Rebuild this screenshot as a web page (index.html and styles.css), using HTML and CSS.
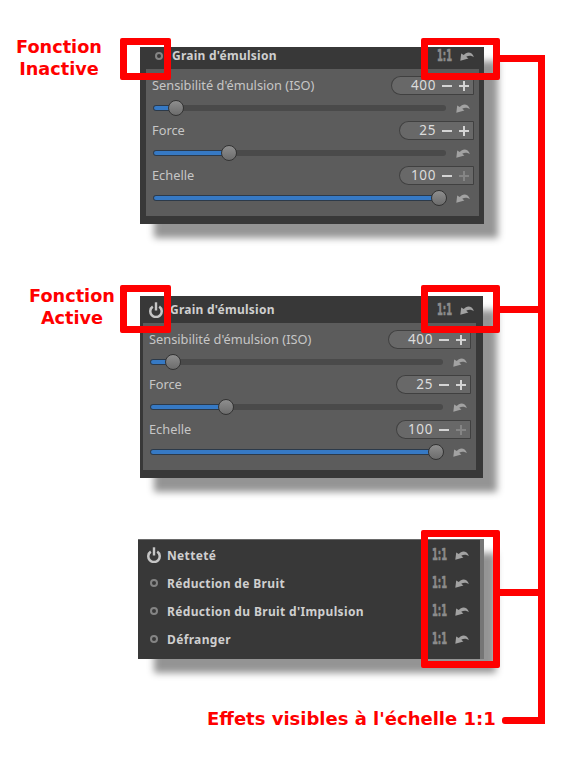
FILE: index.html
```html
<!DOCTYPE html>
<html lang="fr">
<head>
    <meta charset="utf-8">
    <title>Effets visibles à l'échelle 1:1</title>
    <link rel="stylesheet" href="styles.css">
</head>
<body>
    <!-- Icones reutilisees -->
    <svg class="defs" width="0" height="0">
        <symbol id="undo" viewBox="0 0 14 10">
            <path d="M0.3 9.8 L1.2 2.6 L3.8 4 C6.5 0.6 11.8 0.2 14 6.2 C11.5 4.2 8.5 4.2 6.2 5.8 L8.4 7.6 Z" fill="currentColor"/>
        </symbol>
        <symbol id="power" viewBox="0 0 14 16">
            <path d="M3.8 4.6 A5.7 5.7 0 1 0 10.2 4.6" fill="none" stroke="currentColor" stroke-width="2.5"/>
            <rect x="5.8" y="0.3" width="2.4" height="8.2" fill="currentColor"/>
        </symbol>
        <symbol id="minus" viewBox="0 0 10 10">
            <rect x="0" y="4" width="10" height="2" fill="currentColor"/>
        </symbol>
        <symbol id="plus" viewBox="0 0 10 10">
            <rect x="0" y="4" width="10" height="2" fill="currentColor"/>
            <rect x="4" y="0" width="2" height="10" fill="currentColor"/>
        </symbol>
    </svg>

    <div class="canvas">
        <!-- Fonction inactive -->
        <div class="panel panel-inactive">
            <div class="panel-header">
                <span class="dot"></span>
                <span class="panel-title">Grain d'émulsion</span>
                <span class="scale"><span class="scale-text">1:1</span></span>
                <svg class="undo"><use href="#undo"/></svg>
            </div>
            <div class="panel-body">
                <div class="param-label">
                    <span>Sensibilité d'émulsion (ISO)</span>
                    <div class="spin spin-wide">
                        <span class="spin-value">400</span>
                        <svg class="spin-btn"><use href="#minus"/></svg>
                        <svg class="spin-btn"><use href="#plus"/></svg>
                    </div>
                </div>
                <div class="param-slider">
                    <div class="track"><div class="fill" style="width: 7.8%"><span class="thumb"></span></div></div>
                    <svg class="undo"><use href="#undo"/></svg>
                </div>
                <div class="param-label">
                    <span>Force</span>
                    <div class="spin">
                        <span class="spin-value">25</span>
                        <svg class="spin-btn"><use href="#minus"/></svg>
                        <svg class="spin-btn"><use href="#plus"/></svg>
                    </div>
                </div>
                <div class="param-slider">
                    <div class="track"><div class="fill" style="width: 26%"><span class="thumb"></span></div></div>
                    <svg class="undo"><use href="#undo"/></svg>
                </div>
                <div class="param-label">
                    <span>Echelle</span>
                    <div class="spin">
                        <span class="spin-value">100</span>
                        <svg class="spin-btn"><use href="#minus"/></svg>
                        <svg class="spin-btn disabled"><use href="#plus"/></svg>
                    </div>
                </div>
                <div class="param-slider">
                    <div class="track"><div class="fill" style="width: 97.6%"><span class="thumb"></span></div></div>
                    <svg class="undo"><use href="#undo"/></svg>
                </div>
            </div>
        </div>

        <!-- Fonction active -->
        <div class="panel panel-active">
            <div class="panel-header">
                <svg class="power"><use href="#power"/></svg>
                <span class="panel-title">Grain d'émulsion</span>
                <span class="scale"><span class="scale-text">1:1</span></span>
                <svg class="undo"><use href="#undo"/></svg>
            </div>
            <div class="panel-body">
                <div class="param-label">
                    <span>Sensibilité d'émulsion (ISO)</span>
                    <div class="spin spin-wide">
                        <span class="spin-value">400</span>
                        <svg class="spin-btn"><use href="#minus"/></svg>
                        <svg class="spin-btn"><use href="#plus"/></svg>
                    </div>
                </div>
                <div class="param-slider">
                    <div class="track"><div class="fill" style="width: 7.8%"><span class="thumb"></span></div></div>
                    <svg class="undo"><use href="#undo"/></svg>
                </div>
                <div class="param-label">
                    <span>Force</span>
                    <div class="spin">
                        <span class="spin-value">25</span>
                        <svg class="spin-btn"><use href="#minus"/></svg>
                        <svg class="spin-btn"><use href="#plus"/></svg>
                    </div>
                </div>
                <div class="param-slider">
                    <div class="track"><div class="fill" style="width: 26%"><span class="thumb"></span></div></div>
                    <svg class="undo"><use href="#undo"/></svg>
                </div>
                <div class="param-label">
                    <span>Echelle</span>
                    <div class="spin">
                        <span class="spin-value">100</span>
                        <svg class="spin-btn"><use href="#minus"/></svg>
                        <svg class="spin-btn disabled"><use href="#plus"/></svg>
                    </div>
                </div>
                <div class="param-slider">
                    <div class="track"><div class="fill" style="width: 97.6%"><span class="thumb"></span></div></div>
                    <svg class="undo"><use href="#undo"/></svg>
                </div>
            </div>
        </div>

        <!-- Liste des effets -->
        <div class="panel-list">
            <div class="list-row">
                <span class="list-icon"><svg class="power"><use href="#power"/></svg></span>
                <span class="panel-title">Netteté</span>
                <span class="scale"><span class="scale-text">1:1</span></span>
                <svg class="undo"><use href="#undo"/></svg>
            </div>
            <div class="list-row">
                <span class="list-icon"><span class="dot"></span></span>
                <span class="panel-title">Réduction de Bruit</span>
                <span class="scale"><span class="scale-text">1:1</span></span>
                <svg class="undo"><use href="#undo"/></svg>
            </div>
            <div class="list-row">
                <span class="list-icon"><span class="dot"></span></span>
                <span class="panel-title">Réduction du Bruit d'Impulsion</span>
                <span class="scale"><span class="scale-text">1:1</span></span>
                <svg class="undo"><use href="#undo"/></svg>
            </div>
            <div class="list-row">
                <span class="list-icon"><span class="dot"></span></span>
                <span class="panel-title">Défranger</span>
                <span class="scale"><span class="scale-text">1:1</span></span>
                <svg class="undo"><use href="#undo"/></svg>
            </div>
        </div>

        <!-- Annotations en rouge -->
        <div class="note note-inactive">Fonction<br>Inactive</div>
        <div class="note note-active">Fonction<br>Active</div>
        <div class="note note-scale">Effets visibles à l'échelle 1:1</div>

        <div class="box box-a"></div>
        <div class="box box-b"></div>
        <div class="box box-c"></div>
        <div class="box box-d"></div>
        <div class="box box-e"></div>

        <div class="wire wire-main"></div>
        <div class="wire wire-a"></div>
        <div class="wire wire-b"></div>
        <div class="wire wire-c"></div>
        <div class="wire wire-d"></div>
    </div>
</body>
</html>
```

FILE: styles.css
```css
/* Page */
body {
    margin: 0;
    background: #fff;
    font-family: "Noto Sans", sans-serif;
}

.defs {
    position: absolute;
}

.canvas {
    position: relative;
    width: 586px;
    height: 765px;
    overflow: hidden;
    padding-top: 47px;
    box-sizing: border-box;
}

/* Panneaux */
.panel {
    background: #383838;
    box-shadow: 14px 14px 7px rgba(0, 0, 0, 0.42);
    margin-left: 140px;
}

.panel-inactive {
    width: 344px;
    padding-bottom: 8px;
}

.panel-active {
    width: 343px;
    padding-bottom: 8px;
    margin-top: 72px;
}

.panel-header {
    display: flex;
    align-items: center;
    height: 22px;
    box-sizing: border-box;
    padding: 0 10px 5px 0;
}

.panel-active .panel-header {
    height: 27px;
    padding: 0 9px 0 0;
}

.panel-body {
    width: 333px;
    height: 147px;
    box-sizing: border-box;
    margin-left: 6px;
    padding: 7px 5px 0 7px;
    background: #5c5c5c;
    font-size: 12.8px;
    color: #c6c6c6;
}

.panel-active .panel-body {
    margin-left: 3px;
}

.panel-inactive .panel-header .dot {
    margin: 0 9px 0 15px;
}

.panel-active .panel-header .power {
    margin: 0 7px 0 9px;
}

.param-label > span {
    margin-left: -1px;
    padding-bottom: 2px;
}

.panel-title {
    flex: 1;
    font-size: 12px;
    font-weight: 700;
    letter-spacing: 0.25px;
    color: #cfcfcf;
    white-space: nowrap;
}

/* Petites icones */
.dot {
    display: block;
    width: 8px;
    height: 8px;
    box-sizing: border-box;
    border: 2px solid #848484;
    border-radius: 50%;
}

.power {
    display: block;
    width: 14px;
    height: 16px;
    color: #c6c6c6;
}

.scale {
    width: 23px;
    font-family: "DejaVu Sans", sans-serif;
    font-size: 15px;
    font-weight: 700;
    color: #8c8c8c;
}

.scale-text {
    display: block;
    transform: scaleX(0.56);
    transform-origin: left center;
    -webkit-text-stroke: 0.6px #8c8c8c;
}

.undo {
    display: block;
    flex: none;
    width: 14px;
    height: 10px;
    color: #a2a2a2;
}

/* Lignes de parametres */
.param-label {
    display: flex;
    align-items: center;
    justify-content: space-between;
    height: 19px;
}

.param-slider {
    display: flex;
    align-items: center;
    height: 26px;
    padding-right: 4px;
}

.spin {
    display: flex;
    align-items: center;
    justify-content: flex-end;
    width: 75px;
    height: 19px;
    box-sizing: border-box;
    padding-right: 4px;
    background: #686868;
    border: 1px solid #404040;
    border-radius: 10px 1px 1px 10px;
    color: #dcdcdc;
    font-size: 13.5px;
}

.spin-wide {
    width: 83px;
}

.spin-value {
    margin-right: 6px;
    padding-bottom: 2px;
    letter-spacing: 0.6px;
}

.spin-btn {
    display: block;
    width: 10px;
    height: 10px;
    margin-left: 7px;
    color: #d4d4d4;
}

.spin-value + .spin-btn {
    margin-left: 0;
}

.spin-btn.disabled {
    color: #858585;
}

/* Curseurs */
.track {
    flex: 1;
    height: 6px;
    margin-right: 10px;
    background: #4a4a4a;
    border-radius: 3px;
}

.fill {
    position: relative;
    height: 6px;
    box-sizing: border-box;
    background: #3679c4;
    border: 1px solid #2c3a4a;
    border-radius: 3px;
}

.thumb {
    position: absolute;
    top: -6px;
    right: -9px;
    width: 16px;
    height: 16px;
    box-sizing: border-box;
    background: linear-gradient(#8e8e8e, #6c6c6c);
    border: 1px solid #333;
    border-radius: 50%;
}

/* Liste */
.panel-list {
    width: 342px;
    height: 120px;
    box-sizing: border-box;
    margin: 61px 0 0 138px;
    padding-top: 1px;
    background: #383838;
    border-top: 1px solid #6a6a6a;
    box-shadow: 4px 0 0 #757575, 16px 14px 7px rgba(0, 0, 0, 0.42);
}

.list-row {
    display: flex;
    align-items: center;
    height: 28px;
    padding-right: 11px;
}

.list-icon {
    display: flex;
    justify-content: center;
    width: 14px;
    margin: 0 6px 0 9px;
}

.list-row .panel-title {
    letter-spacing: 0.35px;
}

/* Annotations */
.note {
    position: absolute;
    font-family: "DejaVu Sans", sans-serif;
    font-size: 17.7px;
    line-height: 22px;
    font-weight: 700;
    color: #f00;
    text-align: center;
    white-space: nowrap;
}

.note-inactive {
    left: 9px;
    top: 36px;
    width: 100px;
}

.note-active {
    left: 22px;
    top: 285px;
    width: 100px;
}

.note-scale {
    left: 207px;
    top: 708px;
    font-size: 18px;
}

.box {
    position: absolute;
    box-sizing: border-box;
    border: 7px solid #f00;
    border-radius: 2px;
}

.box-a { left: 120px; top: 38px; width: 51px; height: 42px; }
.box-b { left: 421px; top: 38px; width: 79px; height: 42px; }
.box-c { left: 120px; top: 285px; width: 51px; height: 48px; }
.box-d { left: 421px; top: 285px; width: 79px; height: 48px; }
.box-e { left: 421px; top: 530px; width: 79px; height: 138px; }

.wire {
    position: absolute;
    background: #f00;
}

.wire-main { left: 538px; top: 55px; width: 7px; height: 669px; border-radius: 1px; }
.wire-a { left: 500px; top: 55px; width: 45px; height: 7px; }
.wire-b { left: 500px; top: 306px; width: 38px; height: 7px; }
.wire-c { left: 500px; top: 589px; width: 38px; height: 7px; }
.wire-d { left: 502px; top: 717px; width: 43px; height: 7px; border-radius: 3px 0 0 3px; }
```
